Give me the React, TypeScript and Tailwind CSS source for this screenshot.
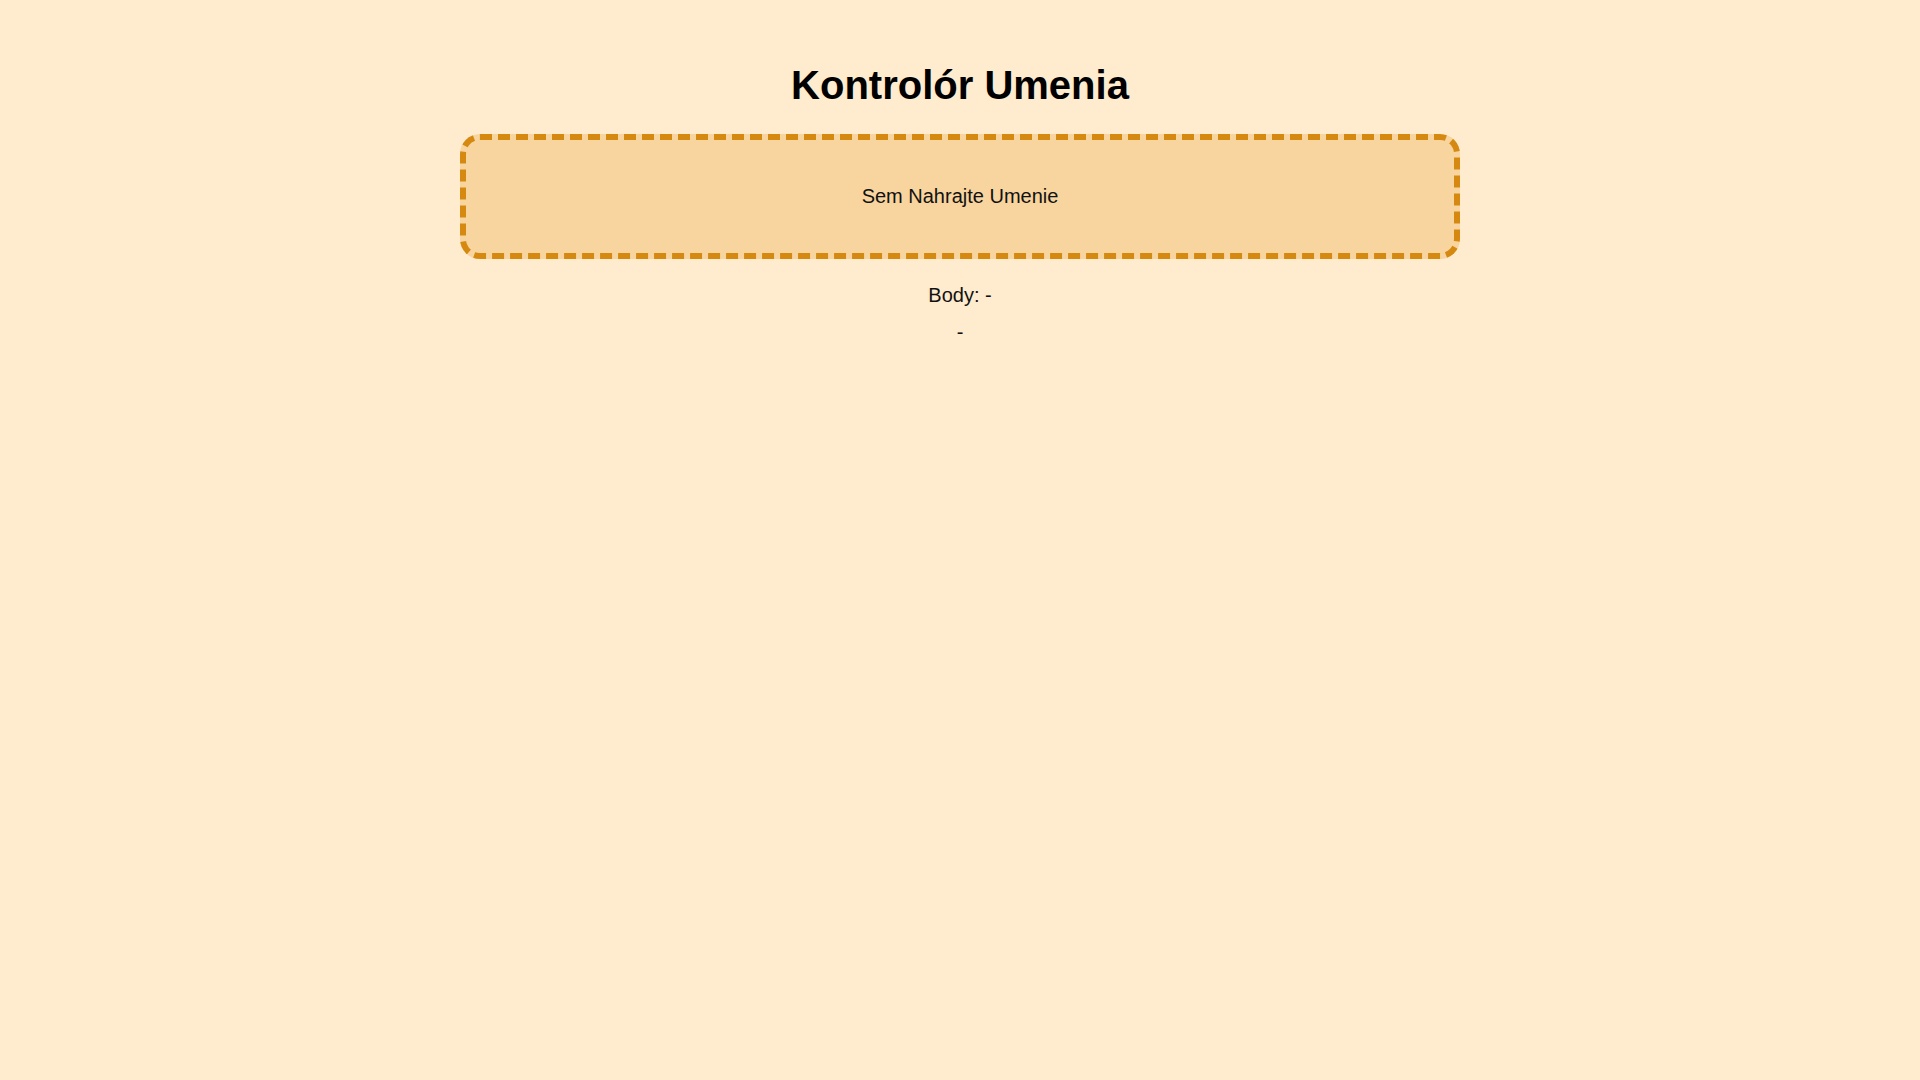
export default function App() {
  return (
    <main className="min-h-screen bg-[#ffebcd] pt-[62px] text-black font-['Liberation_Sans',Arial,sans-serif]">
      <div className="mx-auto w-[1000px] flex flex-col items-center">
        <h1 className="text-[40px] font-bold leading-[46px]">Kontrolór Umenia</h1>

        {/* upload zone */}
        <div className="mt-[26px] w-full h-[125px] flex items-center justify-center border-[6px] border-dashed border-[#d68910] rounded-[20px] bg-[#f8d49e] text-[20px] leading-[23px] text-[#111]">
          Sem Nahrajte Umenie
        </div>

        <p className="mt-[25px] text-[20px] leading-[23px] text-[#111]">Body: -</p>
        <p className="mt-[14px] text-[20px] leading-[23px] text-[#111]">-</p>
      </div>
    </main>
  );
}
